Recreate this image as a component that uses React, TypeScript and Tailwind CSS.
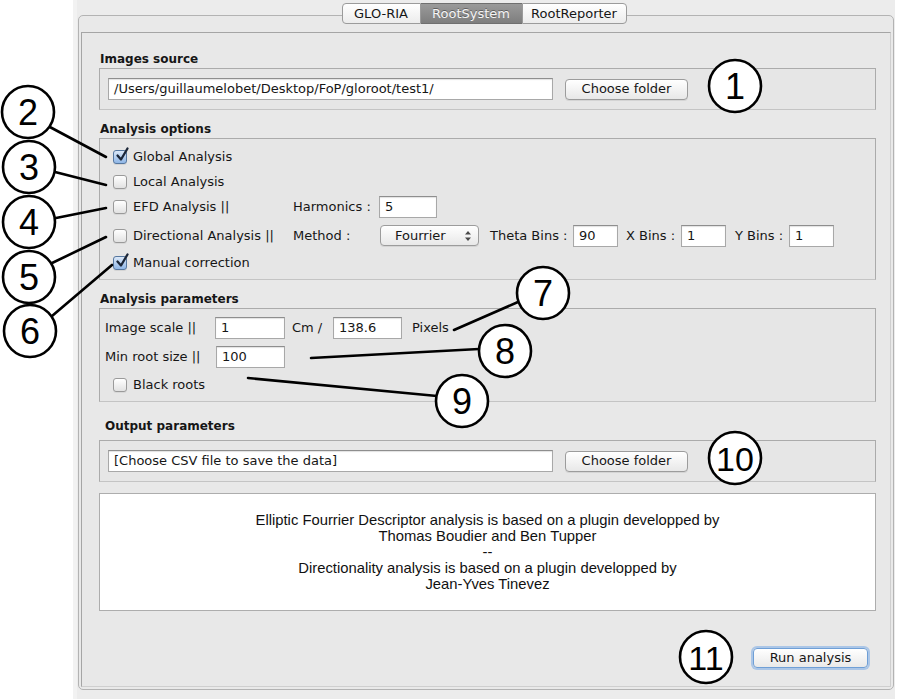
import React from "react";

const ui = "font-['DejaVu_Sans',sans-serif] text-[13px] text-[#161616]";

function Checkbox({ checked }: { checked?: boolean }) {
  if (checked) {
    return (
      <span className="relative flex h-[14px] w-[14px] shrink-0 rounded-[3px] border border-[#56779f] bg-gradient-to-b from-[#dbe8f8] to-[#8fb6e6] shadow-[0_1px_0_rgba(0,0,0,0.08)]">
        <svg viewBox="0 0 16 16" className="absolute -top-[4px] left-[0px] h-[16px] w-[16px] overflow-visible">
          <path d="M3.5 8.5 L7 12.5 L13.5 1.5" fill="none" stroke="#1b2638" strokeWidth="2.3" strokeLinecap="round" strokeLinejoin="round" />
        </svg>
      </span>
    );
  }
  return (
    <span className="h-[14px] w-[14px] shrink-0 rounded-[3px] border border-[#9a9a9a] bg-gradient-to-b from-white to-[#e2e2e2] shadow-[0_1px_0_rgba(0,0,0,0.06)]" />
  );
}

function Field({ value, className }: { value: string; className: string }) {
  return (
    <div
      className={`flex h-[22px] shrink-0 items-center border border-[#a8a8a8] border-t-[#8e8e8e] bg-white px-[5px] shadow-[inset_0_1px_1px_rgba(0,0,0,0.12)] ${className}`}
    >
      {value}
    </div>
  );
}

function MacButton({ label }: { label: string }) {
  return (
    <div className="flex h-[21px] w-[123px] shrink-0 items-center justify-center rounded-[4px] border border-[#9c9c9c] bg-gradient-to-b from-white to-[#e8e8e8] shadow-[0_1px_0_rgba(0,0,0,0.08)]">
      {label}
    </div>
  );
}

function GroupLabel({ text, className }: { text: string; className: string }) {
  return <div className={`h-[17px] text-[12px] font-bold leading-[17px] ${className}`}>{text}</div>;
}

function Callouts() {
  const circles: [number, number, string][] = [
    [735, 86, "1"],
    [28, 112, "2"],
    [29, 167, "3"],
    [29, 222, "4"],
    [29, 277, "5"],
    [30, 331, "6"],
    [543, 293, "7"],
    [505, 351, "8"],
    [462, 401, "9"],
    [735, 458, "10"],
    [706, 657, "11"],
  ];
  const lines: [number, number, number, number][] = [
    [48, 126, 106, 157],
    [55, 172, 106, 185],
    [56, 218, 106, 208],
    [50, 264, 106, 237],
    [52, 316, 112, 265],
    [518, 302, 454, 330],
    [479, 349, 311, 358],
    [248, 378, 437, 396],
  ];
  return (
    <svg className="pointer-events-none absolute left-0 top-0 h-[699px] w-[899px]" viewBox="0 0 899 699">
      {lines.map(([x1, y1, x2, y2], i) => (
        <line key={i} x1={x1} y1={y1} x2={x2} y2={y2} stroke="#000" strokeWidth="2.6" strokeLinecap="round" />
      ))}
      {circles.map(([cx, cy, n]) => (
        <g key={n}>
          <circle cx={cx} cy={cy} r="26" fill="#fff" stroke="#000" strokeWidth="2.6" />
          <text
            x={cx}
            y={cy + 13}
            textAnchor="middle"
            fontSize={n.length > 1 ? 34 : 36}
            fontFamily="Liberation Sans, Arial, sans-serif"
            fill="#000"
          >
            {n}
          </text>
        </g>
      ))}
    </svg>
  );
}

export default function App() {
  return (
    <div className={`relative h-[699px] w-[899px] overflow-hidden bg-white ${ui}`}>
      <div className="flex h-full">
        <div className="w-[73px] shrink-0" />
        <div className="flex h-full w-[822px] shrink-0 flex-col border-l-[4px] border-[#f2f2f2] bg-[#ececec]">
          {/* tabs */}
          <div className="relative z-10 flex justify-center pt-[3px] pr-[4px]">
            <div className="flex h-[21px] w-[79px] items-center justify-center rounded-l-[4px] border border-[#9b9b9b] bg-gradient-to-b from-white to-[#ececec]">
              GLO-RIA
            </div>
            <div className="flex h-[21px] w-[101px] items-center justify-center border-y border-[#6f6f6f] bg-gradient-to-b from-[#9a9a9a] to-[#7e7e7e] text-[#f4f4f4] [text-shadow:0_-1px_0_rgba(0,0,0,0.35)]">
              RootSystem
            </div>
            <div className="flex h-[21px] w-[105px] items-center justify-center rounded-r-[4px] border border-[#9b9b9b] bg-gradient-to-b from-white to-[#ececec]">
              RootReporter
            </div>
          </div>
          {/* tabbed pane */}
          <div className="-mt-[9px] ml-[1px] h-[675px] w-[816px] rounded-[5px] border border-[#b3b3b3] bg-[#e9e9e9] px-[2px] pb-[2px] pt-[16px]">
            <div className="flex h-full flex-col border border-[#a5a5a5] border-b-[#cfcfcf] border-r-[#cfcfcf] bg-[#e8e8e8] pl-[17px]">
              <GroupLabel text="Images source" className="mt-[18px] ml-[1px]" />
              <div className="flex h-[42px] w-[777px] items-center gap-[12px] border border-[#ababab] border-b-[#c4c4c4] bg-[#e6e6e6] pl-[8px]">
                <Field value="/Users/guillaumelobet/Desktop/FoP/gloroot/test1/" className="w-[445px]" />
                <MacButton label="Choose folder" />
              </div>

              <GroupLabel text="Analysis options" className="mt-[11px] ml-[1px]" />
              <div className="flex h-[142px] w-[777px] flex-col border border-[#ababab] border-b-[#c4c4c4] bg-[#e6e6e6] pl-[13px] pt-[5px]">
                <div className="flex h-[25px] items-center gap-[6px]">
                  <Checkbox checked />
                  <span>Global Analysis</span>
                </div>
                <div className="flex h-[25px] items-center gap-[6px]">
                  <Checkbox />
                  <span>Local Analysis</span>
                </div>
                <div className="flex h-[25px] items-center">
                  <div className="flex w-[180px] items-center gap-[6px]">
                    <Checkbox />
                    <span>EFD Analysis ||</span>
                  </div>
                  <span className="w-[86px]">Harmonics :</span>
                  <Field value="5" className="w-[58px]" />
                </div>
                <div className="flex h-[33px] items-center">
                  <div className="flex w-[180px] items-center gap-[6px]">
                    <Checkbox />
                    <span>Directional Analysis ||</span>
                  </div>
                  <span className="w-[87px]">Method :</span>
                  <div className="relative flex h-[21px] w-[99px] items-center rounded-[4px] border border-[#9c9c9c] bg-gradient-to-b from-white to-[#e8e8e8] pl-[14px] shadow-[0_1px_0_rgba(0,0,0,0.08)]">
                    Fourrier
                    <svg viewBox="0 0 8 12" className="absolute right-[6px] top-[4px] h-[12px] w-[8px]">
                      <path d="M4 1 L7 4.5 L1 4.5 Z M4 11 L7 7.5 L1 7.5 Z" fill="#4a4a4a" />
                    </svg>
                  </div>
                  <span className="ml-[11px] w-[83px]">Theta Bins :</span>
                  <Field value="90" className="w-[45px]" />
                  <span className="ml-[8px] w-[55px]">X Bins :</span>
                  <Field value="1" className="w-[45px]" />
                  <span className="ml-[9px] w-[54px]">Y Bins :</span>
                  <Field value="1" className="w-[45px]" />
                </div>
                <div className="flex h-[22px] items-center gap-[6px]">
                  <Checkbox checked />
                  <span>Manual correction</span>
                </div>
              </div>

              <GroupLabel text="Analysis parameters" className="mt-[11px] ml-[1px]" />
              <div className="flex h-[94px] w-[777px] flex-col border border-[#ababab] border-b-[#c4c4c4] bg-[#e6e6e6] pt-[8px]">
                <div className="flex h-[22px] items-center pl-[5px]">
                  <span className="w-[110px]">Image scale ||</span>
                  <Field value="1" className="w-[70px]" />
                  <span className="ml-[7px] w-[41px]">Cm /</span>
                  <Field value="138.6" className="w-[69px]" />
                  <span className="ml-[10px]">Pixels</span>
                </div>
                <div className="mt-[7px] flex h-[22px] items-center pl-[5px]">
                  <span className="w-[111px]">Min root size ||</span>
                  <Field value="100" className="w-[69px]" />
                </div>
                <div className="mt-[6px] flex h-[21px] items-center gap-[6px] pl-[13px]">
                  <Checkbox />
                  <span>Black roots</span>
                </div>
              </div>

              <GroupLabel text="Output parameters" className="mt-[16px] ml-[6px]" />
              <div className="mt-[5px] flex h-[42px] w-[777px] items-center gap-[12px] border border-[#ababab] border-b-[#c4c4c4] bg-[#e6e6e6] pl-[8px]">
                <Field value="[Choose CSV file to save the data]" className="w-[445px]" />
                <MacButton label="Choose folder" />
              </div>

              <div className="mt-[11px] flex h-[118px] w-[777px] flex-col items-center justify-center border border-[#adadad] bg-white font-['Liberation_Sans',Arial,sans-serif] text-[14.8px] leading-[16px] text-[#111]">
                <p>Elliptic Fourrier Descriptor analysis is based on a plugin developped by</p>
                <p>Thomas Boudier and Ben Tupper</p>
                <p>--</p>
                <p>Directionality analysis is based on a plugin developped by</p>
                <p>Jean-Yves Tinevez</p>
              </div>

              <div className="mt-[37px] flex w-[777px] justify-end pr-[8px]">
                <div className="flex h-[20px] w-[115px] items-center justify-center rounded-[4px] border border-[#6f9fd6] bg-gradient-to-b from-white to-[#e9e9e9] shadow-[0_0_0_2px_rgba(120,170,230,0.55)]">
                  Run analysis
                </div>
              </div>
            </div>
          </div>
        </div>
      </div>
      <Callouts />
    </div>
  );
}
